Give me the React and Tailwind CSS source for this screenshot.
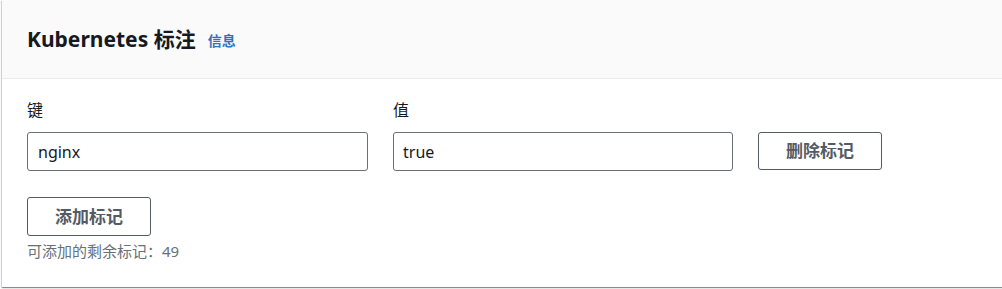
export default function App() {
  return (
    <div
      className="h-[289px] w-[1002px] overflow-hidden bg-white pl-[2px]"
      style={{ fontFamily: '"Noto Sans", "Noto Sans CJK SC", sans-serif' }}
    >
      <div className="w-[1020px] bg-white shadow-[0_1px_1px_0_rgba(0,28,36,0.3),1px_1px_1px_0_rgba(0,28,36,0.15),-1px_1px_1px_0_rgba(0,28,36,0.15)]">
        <div className="flex h-[79px] items-center border-b border-[#eaeded] bg-[#fafafa] px-[25px]">
          <h2 className="text-[21px] font-bold leading-[24px] text-[#16191f]">Kubernetes 标注</h2>
          <a className="ml-[12px] mt-[3px] text-[14px] font-bold text-[#2f73c0]">信息</a>
        </div>
        <div className="px-[25px] pb-[26px] pt-[21px]">
          <div className="flex items-end gap-[25px]">
            <div className="flex flex-col">
              <label className="mb-[12px] text-[16px] leading-[20px] text-[#16191f]">键</label>
              <div className="flex h-[39px] w-[341px] items-center rounded-[3px] border border-[#687078] px-[10px] text-[16px] text-[#16191f]">
                nginx
              </div>
            </div>
            <div className="flex flex-col">
              <label className="mb-[12px] text-[16px] leading-[20px] text-[#16191f]">值</label>
              <div className="flex h-[39px] w-[340px] items-center rounded-[3px] border border-[#687078] px-[9px] text-[16px] text-[#16191f]">
                true
              </div>
            </div>
            <button className="mb-[1px] flex h-[38px] w-[124px] items-center justify-center rounded-[3px] border border-[#545b64] text-[17px] font-bold text-[#545b64]">
              删除标记
            </button>
          </div>
          <button className="mt-[26px] flex h-[39px] w-[124px] items-center justify-center rounded-[3px] border border-[#545b64] text-[17px] font-bold text-[#545b64]">
            添加标记
          </button>
          <p className="mt-[5px] text-[15px] leading-[20px] text-[#687078]">可添加的剩余标记：49</p>
        </div>
      </div>
    </div>
  );
}
